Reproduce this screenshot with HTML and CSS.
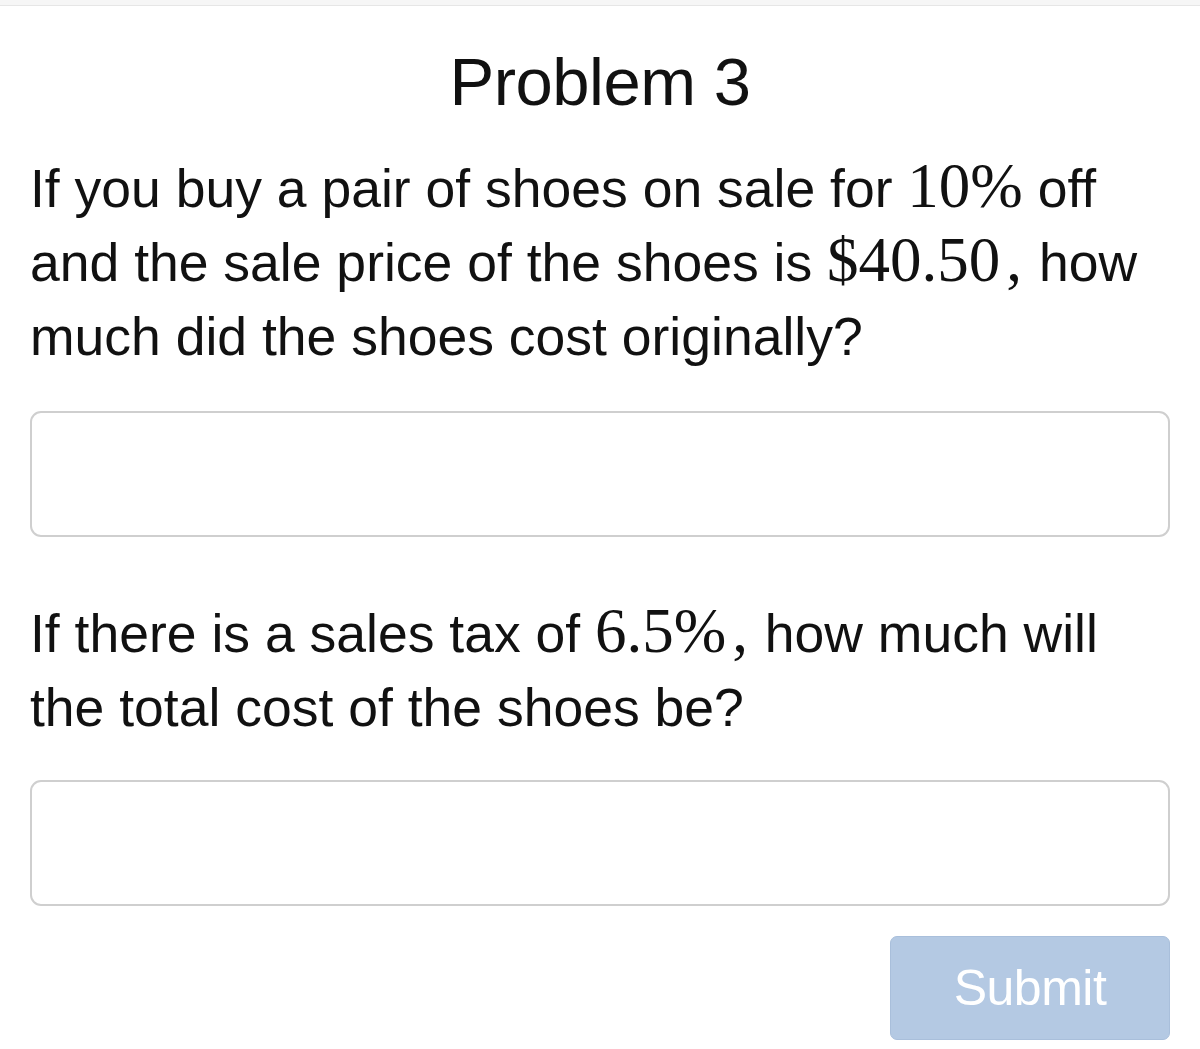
FILE: index.html
```html
<!DOCTYPE html>
<html lang="en">
<head>
<meta charset="utf-8">
<title>Problem 3</title>
<link rel="stylesheet" href="styles.css">
</head>
<body>
<div class="topbar"></div>
<main class="content">
  <h1 class="title">Problem 3</h1>
  <p class="question q1">If you buy a pair of shoes on sale for <span class="math">10%</span> off<br>and the sale price of the shoes is <span class="math">$40.50</span><span class="math punct">,</span> how<br>much did the shoes cost originally?</p>
  <input class="answer a1" type="text" aria-label="Original cost">
  <p class="question q2">If there is a sales tax of <span class="math">6.5%</span><span class="math punct">,</span> how much will<br>the total cost of the shoes be?</p>
  <input class="answer a2" type="text" aria-label="Total cost">
  <div class="actions">
    <button class="submit" type="button">Submit</button>
  </div>
</main>
</body>
</html>
```

FILE: styles.css
```css
html, body {
  margin: 0;
  padding: 0;
  background: #ffffff;
}

body {
  font-family: "Liberation Sans", Arial, sans-serif;
  color: #111111;
}

.topbar {
  height: 5px;
  background: #f6f6f6;
  border-bottom: 1px solid #e6e6e6;
}

.content {
  padding: 0 30px;
}

.title {
  margin: 36px 0 0;
  font-size: 67px;
  line-height: 80px;
  font-weight: 400;
  text-align: center;
  letter-spacing: -0.5px;
}

.question {
  margin: 0;
  font-size: 53.5px;
  line-height: 74px;
  letter-spacing: 0;
}

.q1 {
  margin-top: 30px;
}

.q2 {
  margin-top: 60px;
}

.math {
  font-family: "Liberation Serif", "Times New Roman", serif;
  font-size: 63px;
  line-height: 62px;
  letter-spacing: 0;
}

.punct {
  margin-left: 6px;
  margin-right: 2px;
}

.answer {
  display: block;
  box-sizing: border-box;
  width: 100%;
  height: 126px;
  margin: 0;
  padding: 0 20px;
  border: 2px solid #cfcfcf;
  border-radius: 11px;
  background: #ffffff;
  font-family: "Liberation Sans", Arial, sans-serif;
  font-size: 40px;
  outline: none;
}

.a1 {
  margin-top: 37px;
}

.a2 {
  margin-top: 35px;
}

.actions {
  display: flex;
  justify-content: flex-end;
  margin-top: 30px;
}

.submit {
  width: 280px;
  height: 104px;
  border: 1px solid #a9bfdb;
  border-radius: 7px;
  background: #b4c9e3;
  color: #ffffff;
  font-family: "Liberation Sans", Arial, sans-serif;
  font-size: 50px;
  letter-spacing: -0.5px;
  padding: 0;
}
```
